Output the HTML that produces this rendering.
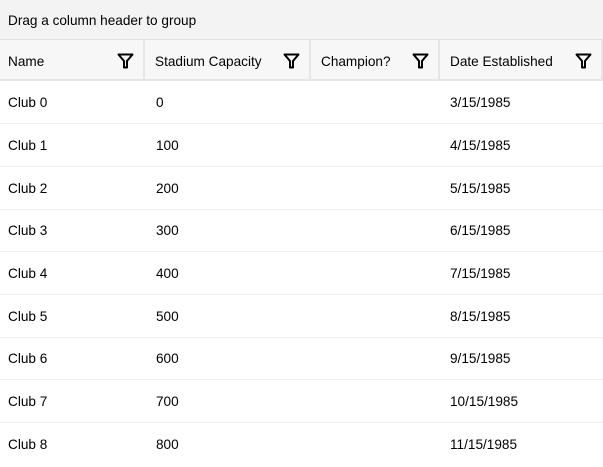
<!DOCTYPE html>
<html><head><style>
body{margin:0;width:603px;height:458px;overflow:hidden;background:#fff;font-family:"Liberation Sans",sans-serif;font-size:13.6px;color:#000}
.grp{position:absolute;left:0;top:0;width:603px;height:40px;background:#f3f3f3;border-bottom:1px solid #e2e2e2;box-sizing:border-box;line-height:42px;padding-left:8px}
.hdr{position:absolute;top:40px;height:41px;background:#f7f7f7;border-bottom:2px solid #e6e6e6;box-sizing:border-box;border-right:2px solid #e6e6e6;line-height:43px;padding-left:10px}
.hdr svg{position:absolute;right:9px;top:13px}
.row{position:absolute;left:0;width:603px;border-bottom:1px solid #efefef;box-sizing:border-box}
.c{position:absolute;top:0;line-height:44px}
</style></head><body>
<div class="grp">Drag a column header to group</div>
<div class="hdr" style="left:0;width:145px;padding-left:8px">Name<svg width="17" height="16" viewBox="0 0 17 16"><path d="M1.5 1.5H15.5L10 8V14.5H7V8Z" fill="none" stroke="#000" stroke-width="2" stroke-linejoin="round"/></svg></div>
<div class="hdr" style="left:145px;width:166px">Stadium Capacity<svg width="17" height="16" viewBox="0 0 17 16"><path d="M1.5 1.5H15.5L10 8V14.5H7V8Z" fill="none" stroke="#000" stroke-width="2" stroke-linejoin="round"/></svg></div>
<div class="hdr" style="left:311px;width:129px">Champion?<svg width="17" height="16" viewBox="0 0 17 16"><path d="M1.5 1.5H15.5L10 8V14.5H7V8Z" fill="none" stroke="#000" stroke-width="2" stroke-linejoin="round"/></svg></div>
<div class="hdr" style="left:440px;width:163px;padding-left:10px">Date Established<svg width="17" height="16" viewBox="0 0 17 16"><path d="M1.5 1.5H15.5L10 8V14.5H7V8Z" fill="none" stroke="#000" stroke-width="2" stroke-linejoin="round"/></svg></div>
<div class="row" style="top:81px;height:43px"><span class="c" style="left:8px">Club 0</span><span class="c" style="left:156px">0</span><span class="c" style="left:450px">3/15/1985</span></div>
<div class="row" style="top:124px;height:43px"><span class="c" style="left:8px">Club 1</span><span class="c" style="left:156px">100</span><span class="c" style="left:450px">4/15/1985</span></div>
<div class="row" style="top:167px;height:43px"><span class="c" style="left:8px">Club 2</span><span class="c" style="left:156px">200</span><span class="c" style="left:450px">5/15/1985</span></div>
<div class="row" style="top:209px;height:43px"><span class="c" style="left:8px">Club 3</span><span class="c" style="left:156px">300</span><span class="c" style="left:450px">6/15/1985</span></div>
<div class="row" style="top:252px;height:43px"><span class="c" style="left:8px">Club 4</span><span class="c" style="left:156px">400</span><span class="c" style="left:450px">7/15/1985</span></div>
<div class="row" style="top:295px;height:43px"><span class="c" style="left:8px">Club 5</span><span class="c" style="left:156px">500</span><span class="c" style="left:450px">8/15/1985</span></div>
<div class="row" style="top:337px;height:43px"><span class="c" style="left:8px">Club 6</span><span class="c" style="left:156px">600</span><span class="c" style="left:450px">9/15/1985</span></div>
<div class="row" style="top:380px;height:43px"><span class="c" style="left:8px">Club 7</span><span class="c" style="left:156px">700</span><span class="c" style="left:450px">10/15/1985</span></div>
<div class="row" style="top:423px;height:43px;border:none"><span class="c" style="left:8px">Club 8</span><span class="c" style="left:156px">800</span><span class="c" style="left:450px">11/15/1985</span></div>
</body></html>
